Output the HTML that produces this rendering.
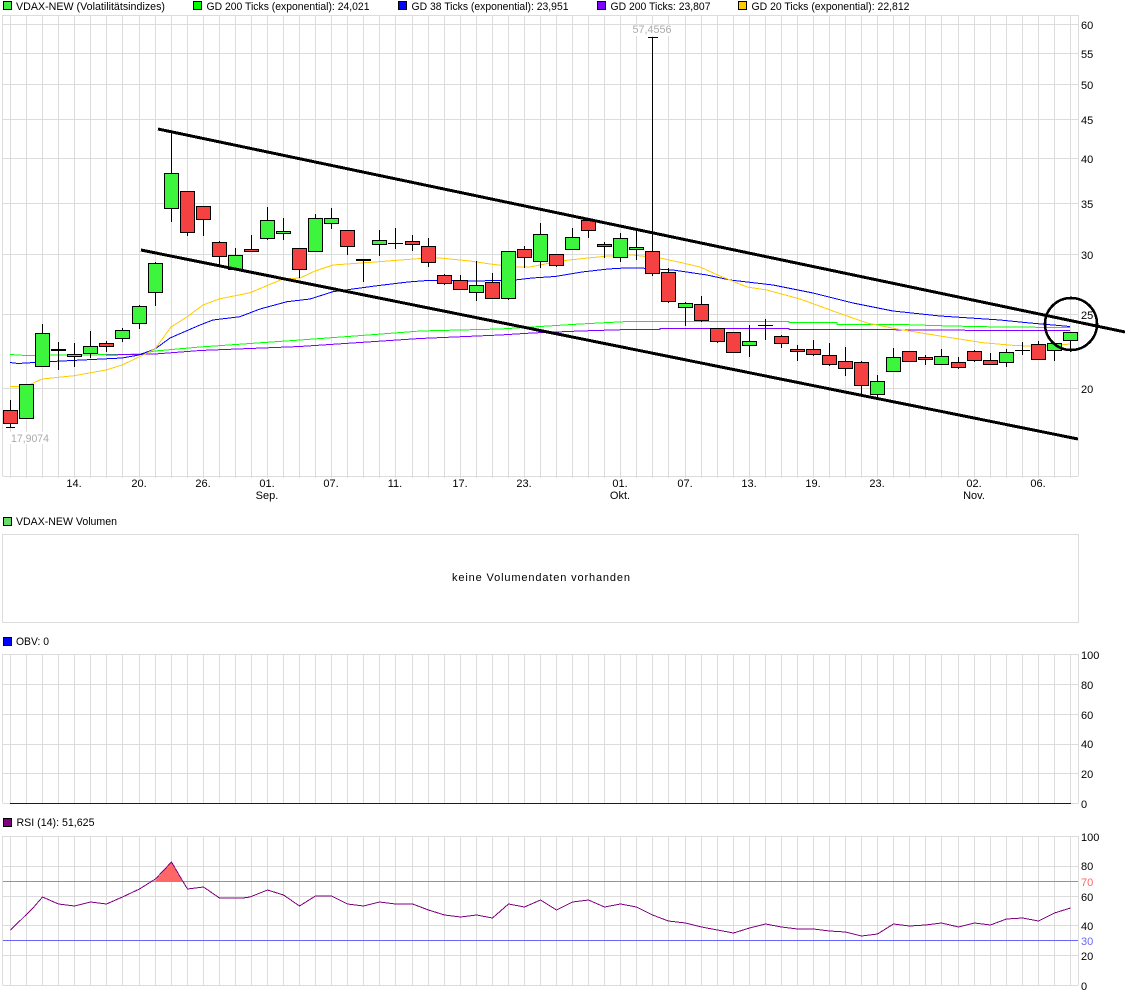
<!DOCTYPE html>
<html lang="de">
<head>
<meta charset="utf-8">
<title>VDAX-NEW Chart</title>
<style>
html,body{margin:0;padding:0;background:#fff;width:1125px;height:997px;overflow:hidden}
svg{display:block}
text{font-family:"Liberation Sans",Arial,sans-serif;font-size:11px;fill:#000}
.gr{fill:none;stroke:#dcdcdc;stroke-width:1;shape-rendering:crispEdges}
.ma{fill:none;stroke-width:1;shape-rendering:crispEdges}
.g{fill:#3ef53e;stroke:#000;stroke-width:1;shape-rendering:crispEdges}
.r{fill:#f44242;stroke:#000;stroke-width:1;shape-rendering:crispEdges}
.w{fill:none;stroke:#000;stroke-width:1;shape-rendering:crispEdges}
.s{stroke:#000;stroke-width:1;shape-rendering:crispEdges}
.m{text-anchor:middle}
</style>
</head>
<body>
<svg width="1125" height="997" viewBox="0 0 1125 997" xmlns="http://www.w3.org/2000/svg">
<rect width="1125" height="997" fill="#fff"/>

<!-- legend -->
<rect class="s" x="3.5" y="1.5" width="8" height="8" fill="#40f040"/>
<text x="16" y="10" textLength="149" lengthAdjust="spacingAndGlyphs">VDAX-NEW (Volatilitätsindizes)</text>
<rect class="s" x="193.5" y="1.5" width="8" height="8" fill="#00ff00"/>
<text x="206.5" y="10" textLength="163" lengthAdjust="spacingAndGlyphs">GD 200 Ticks (exponential): 24,021</text>
<rect class="s" x="398.5" y="1.5" width="8" height="8" fill="#0000ff"/>
<text x="411.5" y="10" textLength="157" lengthAdjust="spacingAndGlyphs">GD 38 Ticks (exponential): 23,951</text>
<rect class="s" x="597.5" y="1.5" width="8" height="8" fill="#8000ff"/>
<text x="610.5" y="10" textLength="100" lengthAdjust="spacingAndGlyphs">GD 200 Ticks: 23,807</text>
<rect class="s" x="738.5" y="1.5" width="8" height="8" fill="#ffcc00"/>
<text x="751.5" y="10" textLength="158" lengthAdjust="spacingAndGlyphs">GD 20 Ticks (exponential): 22,812</text>

<!-- main grid -->
<path class="gr" d="M2.5 15.5H1078.5M2.5 24.5H1078.5M2.5 53.5H1078.5M2.5 84.5H1078.5M2.5 119.5H1078.5M2.5 158.5H1078.5M2.5 203.5H1078.5M2.5 254.5H1078.5M2.5 314.5H1078.5M2.5 388.5H1078.5M2.5 476.5H1078.5M2.5 15V476M1078.5 15V476"/>
<path class="gr" d="M10.5 15V478M26.5 15V478M42.5 15V478M58.5 15V478M74.5 15V478M90.5 15V478M106.5 15V478M122.5 15V478M139.5 15V478M155.5 15V478M171.5 15V478M187.5 15V478M203.5 15V478M219.5 15V478M235.5 15V478M251.5 15V478M267.5 15V478M283.5 15V478M299.5 15V478M315.5 15V478M331.5 15V478M347.5 15V478M363.5 15V478M379.5 15V478M395.5 15V478M412.5 15V478M428.5 15V478M444.5 15V478M460.5 15V478M476.5 15V478M492.5 15V478M508.5 15V478M524.5 15V478M540.5 15V478M556.5 15V478M572.5 15V478M588.5 15V478M604.5 15V478M620.5 15V478M636.5 15V478M652.5 15V478M668.5 15V478M685.5 15V478M701.5 15V478M717.5 15V478M733.5 15V478M749.5 15V478M765.5 15V478M781.5 15V478M797.5 15V478M813.5 15V478M829.5 15V478M845.5 15V478M861.5 15V478M877.5 15V478M893.5 15V478M909.5 15V478M925.5 15V478M941.5 15V478M958.5 15V478M974.5 15V478M990.5 15V478M1006.5 15V478M1022.5 15V478M1038.5 15V478M1054.5 15V478M1070.5 15V478"/>

<!-- value labels -->
<rect x="628" y="25" width="50" height="11" fill="#fff"/>
<text x="652" y="33" class="m" style="fill:#aaa" textLength="39" lengthAdjust="spacingAndGlyphs">57,4556</text>
<rect x="8" y="432" width="44" height="12" fill="#fff"/>
<text x="11" y="442" style="fill:#aaa" textLength="38" lengthAdjust="spacingAndGlyphs">17,9074</text>

<!-- moving averages -->
<polyline class="ma" stroke="#00ff00" points="10,354.5 26,355.5 122,354.5 139,354 155,351 200,347 300,340 375,334.5 420,331 500,329 532,327 580,324 628,321.5 789,321.5 789,322.5 837,322.5 837,324.5 901,324.5 950,326 1000,327 1070,327.5"/>
<polyline class="ma" stroke="#7f00ff" points="106,355 155,354 200,350.5 300,346.5 375,341.5 420,338.5 500,335 532,333 580,331 628,329.5 660,329.5 660,328.5 789,328.5 789,329.5 860,329.5 1000,330.5 1070,330.5"/>
<polyline class="ma" stroke="#0000ff" points="10,362.5 18,363.5 42,362 122,358 139,355 155,349 170,338 200,325 213,320 240,316.7 260,309 287,301.7 310,299 333,291.7 375,286 408,282 430,280.3 475,281 515,280 532,278 555,276.5 582,272 608,269 625,268 640,268 673,270 707,275 730,280 773,285 813,293 853,303 893,311 940,316 1000,320 1030,323 1070,326.5"/>
<polyline class="ma" stroke="#ffcc00" points="10,386.5 26,386.5 42,379 74,375.7 106,370 122,365 139,357 155,349 171,327 187,317 203,305 219,299 250,292.7 283,279 300,278 315,271 333,265 375,262 420,258.5 440,258 470,261 490,264 515,267 530,267 560,261 588,258 608,256 632,255 660,258 683,263 700,267 720,276 747,287 767,290 800,299 833,311 867,323 897,329 940,336 983,342.7 1017,345.7 1050,346 1070,344"/>

<!-- wicks -->
<path class="w" d="M10.5 400V427M6 427.5H15M42.5 324V366M58.5 342V370M74.5 343V367M90.5 331V358M106.5 341V352M122.5 328V342M139.5 305V329M155.5 262V306M171.5 132V222M187.5 191V236M203.5 206V236M219.5 241V265M235.5 248V270M251.5 235V252M267.5 207V240M283.5 218V240M299.5 248V278M315.5 214V252M331.5 208V229M347.5 230V255M363.5 259V282M379.5 230V256M395.5 228V249M412.5 235V251M428.5 238V267M444.5 274V285M460.5 275V290M476.5 261V301M492.5 273V298M508.5 251V300M524.5 246V268M540.5 223V268M556.5 254V267M572.5 228V249M588.5 218V238M604.5 242V258M620.5 233V262M636.5 230V260M652.5 37V276M648 37.5H658M668.5 268V303M685.5 302V326M701.5 296V322M717.5 328V343M733.5 332V353M749.5 325V357M765.5 319V340M781.5 335V348M797.5 345V361M813.5 340V356M829.5 343V366M845.5 347V376M861.5 361V396M877.5 375V398M893.5 348V372M909.5 351V362M925.5 355V365M941.5 349V364M958.5 357V369M974.5 350V362M990.5 353V364M1006.5 349V367M1022.5 342V355M1038.5 341V360M1054.5 343V361M1070.5 332V352"/>
<path class="w" d="M388 243.5H403M758 325.5H773M1015 350.5H1030"/>
<path class="w" style="stroke-width:2" d="M51 350H66M356 260H371"/>

<!-- candles -->
<g class="bodies">
<rect class="r" x="3.5" y="410.5" width="14" height="13"/>
<rect class="g" x="19.5" y="384.5" width="14" height="34"/>
<rect class="g" x="35.5" y="333.5" width="14" height="33"/>
<rect class="g" x="67.5" y="354.5" width="14" height="2"/>
<rect class="g" x="83.5" y="346.5" width="14" height="7"/>
<rect class="r" x="99.5" y="343.5" width="14" height="3"/>
<rect class="g" x="115.5" y="330.5" width="14" height="8"/>
<rect class="g" x="132.5" y="306.5" width="14" height="17"/>
<rect class="g" x="148.5" y="263.5" width="14" height="29"/>
<rect class="g" x="164.5" y="173.5" width="14" height="35"/>
<rect class="r" x="180.5" y="191.5" width="14" height="41"/>
<rect class="r" x="196.5" y="206.5" width="14" height="13"/>
<rect class="r" x="212.5" y="242.5" width="14" height="14"/>
<rect class="g" x="228.5" y="255.5" width="14" height="14"/>
<rect class="r" x="244.5" y="249.5" width="14" height="2"/>
<rect class="g" x="260.5" y="220.5" width="14" height="18"/>
<rect class="g" x="276.5" y="231.5" width="14" height="2"/>
<rect class="r" x="292.5" y="248.5" width="14" height="21"/>
<rect class="g" x="308.5" y="218.5" width="14" height="33"/>
<rect class="g" x="324.5" y="218.5" width="14" height="5"/>
<rect class="r" x="340.5" y="230.5" width="14" height="16"/>
<rect class="g" x="372.5" y="240.5" width="14" height="4"/>
<rect class="r" x="405.5" y="241.5" width="14" height="3"/>
<rect class="r" x="421.5" y="246.5" width="14" height="16"/>
<rect class="r" x="437.5" y="275.5" width="14" height="8"/>
<rect class="r" x="453.5" y="280.5" width="14" height="9"/>
<rect class="g" x="469.5" y="285.5" width="14" height="7"/>
<rect class="r" x="485.5" y="282.5" width="14" height="16"/>
<rect class="g" x="501.5" y="251.5" width="14" height="47"/>
<rect class="r" x="517.5" y="249.5" width="14" height="8"/>
<rect class="g" x="533.5" y="234.5" width="14" height="27"/>
<rect class="r" x="549.5" y="254.5" width="14" height="11"/>
<rect class="g" x="565.5" y="237.5" width="14" height="12"/>
<rect class="r" x="581.5" y="220.5" width="14" height="10"/>
<rect class="r" x="597.5" y="244.5" width="14" height="2"/>
<rect class="g" x="613.5" y="238.5" width="14" height="19"/>
<rect class="g" x="629.5" y="247.5" width="14" height="2"/>
<rect class="r" x="645.5" y="251.5" width="14" height="22"/>
<rect class="r" x="661.5" y="272.5" width="14" height="29"/>
<rect class="g" x="678.5" y="303.5" width="14" height="4"/>
<rect class="r" x="694.5" y="304.5" width="14" height="16"/>
<rect class="r" x="710.5" y="328.5" width="14" height="13"/>
<rect class="r" x="726.5" y="332.5" width="14" height="20"/>
<rect class="g" x="742.5" y="341.5" width="14" height="4"/>
<rect class="r" x="774.5" y="336.5" width="14" height="7"/>
<rect class="r" x="790.5" y="349.5" width="14" height="2"/>
<rect class="r" x="806.5" y="349.5" width="14" height="5"/>
<rect class="r" x="822.5" y="355.5" width="14" height="9"/>
<rect class="r" x="838.5" y="361.5" width="14" height="7"/>
<rect class="r" x="854.5" y="362.5" width="14" height="23"/>
<rect class="g" x="870.5" y="381.5" width="14" height="13"/>
<rect class="g" x="886.5" y="357.5" width="14" height="14"/>
<rect class="r" x="902.5" y="351.5" width="14" height="10"/>
<rect class="r" x="918.5" y="357.5" width="14" height="2"/>
<rect class="g" x="934.5" y="356.5" width="14" height="8"/>
<rect class="r" x="951.5" y="362.5" width="14" height="5"/>
<rect class="r" x="967.5" y="351.5" width="14" height="9"/>
<rect class="r" x="983.5" y="360.5" width="14" height="4"/>
<rect class="g" x="999.5" y="352.5" width="14" height="10"/>
<rect class="r" x="1031.5" y="344.5" width="14" height="15"/>
<rect class="g" x="1047.5" y="343.5" width="14" height="7"/>
<rect class="g" x="1063.5" y="332.5" width="14" height="8"/>
</g>

<!-- y axis main -->
<text x="1081" y="29">60</text>
<text x="1081" y="58">55</text>
<text x="1081" y="89">50</text>
<text x="1081" y="124">45</text>
<text x="1081" y="163">40</text>
<text x="1081" y="208">35</text>
<text x="1081" y="259">30</text>
<text x="1081" y="319">25</text>
<text x="1081" y="393">20</text>

<!-- x axis -->
<text class="m" x="74" y="487">14.</text>
<text class="m" x="139" y="487">20.</text>
<text class="m" x="203" y="487">26.</text>
<text class="m" x="267" y="487">01.</text>
<text class="m" x="267" y="499">Sep.</text>
<text class="m" x="331" y="487">07.</text>
<text class="m" x="395" y="487">11.</text>
<text class="m" x="460" y="487">17.</text>
<text class="m" x="524" y="487">23.</text>
<text class="m" x="620" y="487">01.</text>
<text class="m" x="620" y="499">Okt.</text>
<text class="m" x="685" y="487">07.</text>
<text class="m" x="749" y="487">13.</text>
<text class="m" x="813" y="487">19.</text>
<text class="m" x="877" y="487">23.</text>
<text class="m" x="974" y="487">02.</text>
<text class="m" x="974" y="499">Nov.</text>
<text class="m" x="1038" y="487">06.</text>

<!-- drawn trend lines + circle -->
<g fill="none" stroke="#000" stroke-width="3" shape-rendering="crispEdges">
<line x1="158" y1="129" x2="1125" y2="332"/>
<line x1="141" y1="250" x2="1078" y2="439"/>
<circle cx="1071" cy="324" r="26" stroke-width="2.6"/>
</g>

<!-- volume panel -->
<rect class="s" x="3.5" y="517.5" width="8" height="8" fill="#66dd66"/>
<text x="16" y="525" textLength="101" lengthAdjust="spacingAndGlyphs">VDAX-NEW Volumen</text>
<rect class="gr" x="2.5" y="534.5" width="1076" height="88"/>
<text x="452" y="581" textLength="178" lengthAdjust="spacing">keine Volumendaten vorhanden</text>

<!-- OBV panel -->
<rect class="s" x="3.5" y="637.5" width="8" height="8" fill="#0000ff"/>
<text x="16" y="645" textLength="33" lengthAdjust="spacingAndGlyphs">OBV: 0</text>
<path class="gr" d="M2.5 654.5H1078.5M2.5 684.5H1078.5M2.5 714.5H1078.5M2.5 744.5H1078.5M2.5 773.5H1078.5M2.5 803.5H1078.5M2.5 654V803M1078.5 654V803"/>
<path class="gr" d="M10.5 654V803M26.5 654V803M42.5 654V803M58.5 654V803M74.5 654V803M90.5 654V803M106.5 654V803M122.5 654V803M139.5 654V803M155.5 654V803M171.5 654V803M187.5 654V803M203.5 654V803M219.5 654V803M235.5 654V803M251.5 654V803M267.5 654V803M283.5 654V803M299.5 654V803M315.5 654V803M331.5 654V803M347.5 654V803M363.5 654V803M379.5 654V803M395.5 654V803M412.5 654V803M428.5 654V803M444.5 654V803M460.5 654V803M476.5 654V803M492.5 654V803M508.5 654V803M524.5 654V803M540.5 654V803M556.5 654V803M572.5 654V803M588.5 654V803M604.5 654V803M620.5 654V803M636.5 654V803M652.5 654V803M668.5 654V803M685.5 654V803M701.5 654V803M717.5 654V803M733.5 654V803M749.5 654V803M765.5 654V803M781.5 654V803M797.5 654V803M813.5 654V803M829.5 654V803M845.5 654V803M861.5 654V803M877.5 654V803M893.5 654V803M909.5 654V803M925.5 654V803M941.5 654V803M958.5 654V803M974.5 654V803M990.5 654V803M1006.5 654V803M1022.5 654V803M1038.5 654V803M1054.5 654V803M1070.5 654V803"/>
<line class="ma" stroke="#0000ff" x1="10" y1="803.5" x2="1071" y2="803.5"/>
<text x="1081" y="659">100</text>
<text x="1081" y="689">80</text>
<text x="1081" y="719">60</text>
<text x="1081" y="748">40</text>
<text x="1081" y="778">20</text>
<text x="1081" y="808">0</text>

<!-- RSI panel -->
<rect class="s" x="3.5" y="818.5" width="8" height="8" fill="#800080"/>
<text x="16.5" y="826" textLength="78" lengthAdjust="spacingAndGlyphs">RSI (14): 51,625</text>
<path class="gr" d="M2.5 836.5H1078.5M2.5 866.5H1078.5M2.5 896.5H1078.5M2.5 925.5H1078.5M2.5 955.5H1078.5M2.5 985.5H1078.5M2.5 836V985M1078.5 836V985"/>
<path class="gr" d="M10.5 836V985M26.5 836V985M42.5 836V985M58.5 836V985M74.5 836V985M90.5 836V985M106.5 836V985M122.5 836V985M139.5 836V985M155.5 836V985M171.5 836V985M187.5 836V985M203.5 836V985M219.5 836V985M235.5 836V985M251.5 836V985M267.5 836V985M283.5 836V985M299.5 836V985M315.5 836V985M331.5 836V985M347.5 836V985M363.5 836V985M379.5 836V985M395.5 836V985M412.5 836V985M428.5 836V985M444.5 836V985M460.5 836V985M476.5 836V985M492.5 836V985M508.5 836V985M524.5 836V985M540.5 836V985M556.5 836V985M572.5 836V985M588.5 836V985M604.5 836V985M620.5 836V985M636.5 836V985M652.5 836V985M668.5 836V985M685.5 836V985M701.5 836V985M717.5 836V985M733.5 836V985M749.5 836V985M765.5 836V985M781.5 836V985M797.5 836V985M813.5 836V985M829.5 836V985M845.5 836V985M861.5 836V985M877.5 836V985M893.5 836V985M909.5 836V985M925.5 836V985M941.5 836V985M958.5 836V985M974.5 836V985M990.5 836V985M1006.5 836V985M1022.5 836V985M1038.5 836V985M1054.5 836V985M1070.5 836V985"/>
<polygon points="155,881 171,862 182,881" fill="#ff6666"/>
<line class="ma" stroke="#ff6666" x1="3" y1="881.5" x2="1078" y2="881.5"/>
<line class="ma" stroke="#6666ff" x1="3" y1="940.5" x2="1078" y2="940.5"/>
<polyline fill="none" stroke="#800080" stroke-width="1" shape-rendering="crispEdges" points="10.5,930 33,908 42.5,897 58.5,904 74.5,906 90.5,902 106.5,904 122.5,897 139.5,889 155.5,879 171.5,862 182,880 187.5,889 203.5,887 219.5,898 243,898 250,897 267.5,890 283.5,895 299.5,906 315.5,896 331.5,896 347.5,904 363.5,906 379.5,902 395.5,904 412.5,904 428.5,910 444.5,915 460.5,917 476.5,915 492.5,918 508.5,904 524.5,907 540.5,900 556.5,910 572.5,902 588.5,900 604.5,907 620.5,904 636.5,907 652.5,915 668.5,921 685.5,923 701.5,927 717.5,930 733.5,933 749.5,928 765.5,924 781.5,927 797.5,929 813.5,929 829.5,931 845.5,932 861.5,936 877.5,934 893.5,924 909.5,926 925.5,925 941.5,923 958.5,927 974.5,923 990.5,925 1006.5,919 1022.5,918 1038.5,921 1054.5,913 1070.5,908"/>
<text x="1081" y="841">100</text>
<text x="1081" y="870">80</text>
<text x="1081" y="886" style="fill:#ff6666">70</text>
<text x="1081" y="901">60</text>
<text x="1081" y="930">40</text>
<text x="1081" y="945" style="fill:#6666ff">30</text>
<text x="1081" y="960">20</text>
<text x="1081" y="990">0</text>
</svg>
</body>
</html>
